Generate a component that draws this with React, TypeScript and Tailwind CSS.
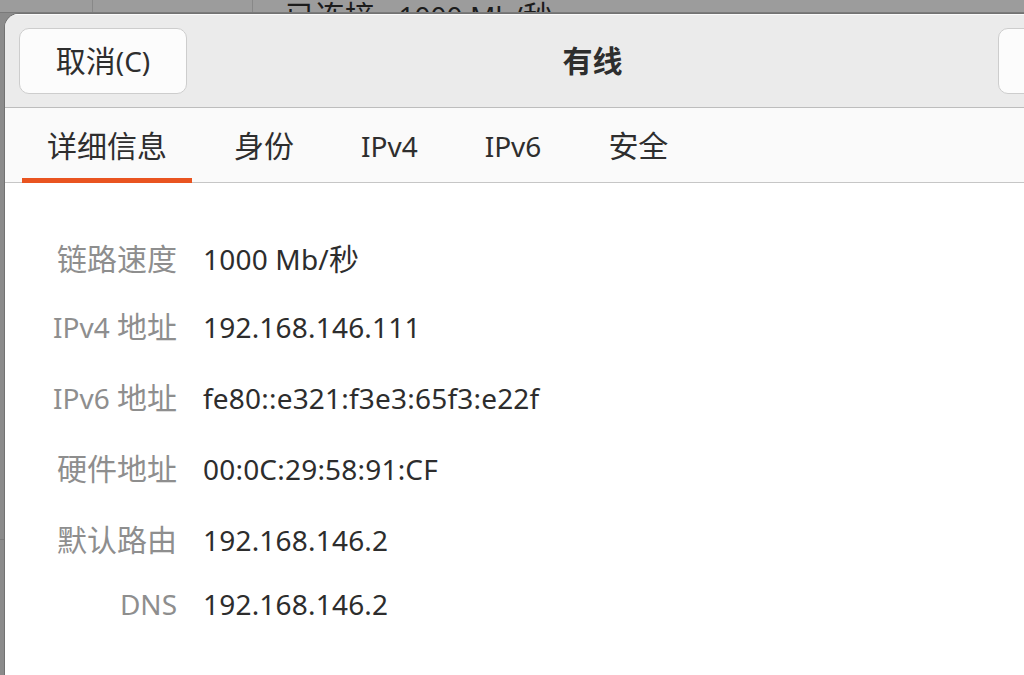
import React from "react";

const CJK = /([\u3000-\u9fff\uff00-\uffef]+)/;

function T({ s }: { s: string }) {
  const parts = s.split(CJK);
  return (
    <>
      {parts.map((p, i) =>
        CJK.test(p) ? (
          <span key={i} className="text-[30px]">
            {p}
          </span>
        ) : (
          <React.Fragment key={i}>{p}</React.Fragment>
        )
      )}
    </>
  );
}

const rows = [
  { label: "链路速度", value: "1000 Mb/秒", mt: "mt-[56px]" },
  { label: "IPv4 地址", value: "192.168.146.111", mt: "mt-[28px]" },
  { label: "IPv6 地址", value: "fe80::e321:f3e3:65f3:e22f", mt: "mt-[31px]" },
  { label: "硬件地址", value: "00:0C:29:58:91:CF", mt: "mt-[31px]" },
  { label: "默认路由", value: "192.168.146.2", mt: "mt-[31px]" },
  { label: "DNS", value: "192.168.146.2", mt: "mt-[24px]" },
];

const tabs = ["详细信息", "身份", "IPv4", "IPv6", "安全"];

export default function App() {
  return (
    <div className="relative w-[1024px] h-[675px] overflow-hidden bg-[#8b8b8b] font-['Noto_Sans','Noto_Sans_CJK_SC',sans-serif] text-[28px] leading-none">
      {/* background window (dimmed) */}
      <div className="absolute left-0 top-0 w-[1024px] h-[13px] bg-[#9c9c9c] overflow-hidden border-b border-[#7a7a7a]">
        <div className="absolute left-[92px] top-0 h-full w-px bg-[#888888]" />
        <div className="absolute left-[252px] top-0 h-full w-px bg-[#888888]" />
        <div className="absolute left-[285px] top-[1px] whitespace-nowrap text-[#1c1c1c]">
          <T s="已连接 - 1000 Mb/秒" />
        </div>
      </div>
      <div className="absolute left-0 top-[539px] w-[5px] h-px bg-[#7b7b7b]" />

      {/* dialog */}
      <div className="absolute left-[4px] top-[13px] w-[1176px] h-[700px] rounded-tl-[15px] bg-[#727272] pl-px pt-px">
        <div className="flex h-full flex-col overflow-hidden rounded-tl-[14px] bg-white">
          {/* header bar */}
          <div className="flex h-[94px] shrink-0 items-center justify-between border-t border-t-[#fbfbfb] border-b border-b-[#bdbdbd] bg-[#ebebeb] px-[14px]">
            <div className="flex h-[66px] w-[168px] items-center justify-center rounded-[10px] border border-[#cdcdcd] bg-[#fcfcfc] text-[#2e2e2e]">
              <T s="取消(C)" />
            </div>
            <div className="text-[30px] font-semibold text-[#2e2e2e]">有线</div>
            <div className="h-[66px] w-[168px] rounded-[10px] border border-[#cdcdcd] bg-[#fcfcfc]" />
          </div>

          {/* tab bar */}
          <div className="flex h-[75px] shrink-0 items-stretch gap-[17px] border-b border-[#c6c6c6] bg-[#fafafa] pl-[17px]">
            {tabs.map((t, i) => (
              <div
                key={t}
                className={
                  i === 0
                    ? "mb-[-1px] flex items-center border-b-[5px] border-[#e95420] px-[25px] pt-[6px] text-[#2e2e2e]"
                    : "mb-[-1px] flex items-center border-b-[5px] border-transparent px-[25px] pt-[6px] text-[#2e2e2e]"
                }
              >
                <span>
                  <T s={t} />
                </span>
              </div>
            ))}
          </div>

          {/* content */}
          <div className="flex flex-col">
            {rows.map((r) => (
              <div key={r.label} className={`${r.mt} flex h-[40px] items-center`}>
                <div className="w-[172px] whitespace-nowrap text-right text-[#8e8e8e]">
                  <T s={r.label} />
                </div>
                <div className="ml-[26px] whitespace-nowrap text-[#2d2d2d] tracking-[0.2px]">
                  <T s={r.value} />
                </div>
              </div>
            ))}
          </div>
        </div>
      </div>
    </div>
  );
}
